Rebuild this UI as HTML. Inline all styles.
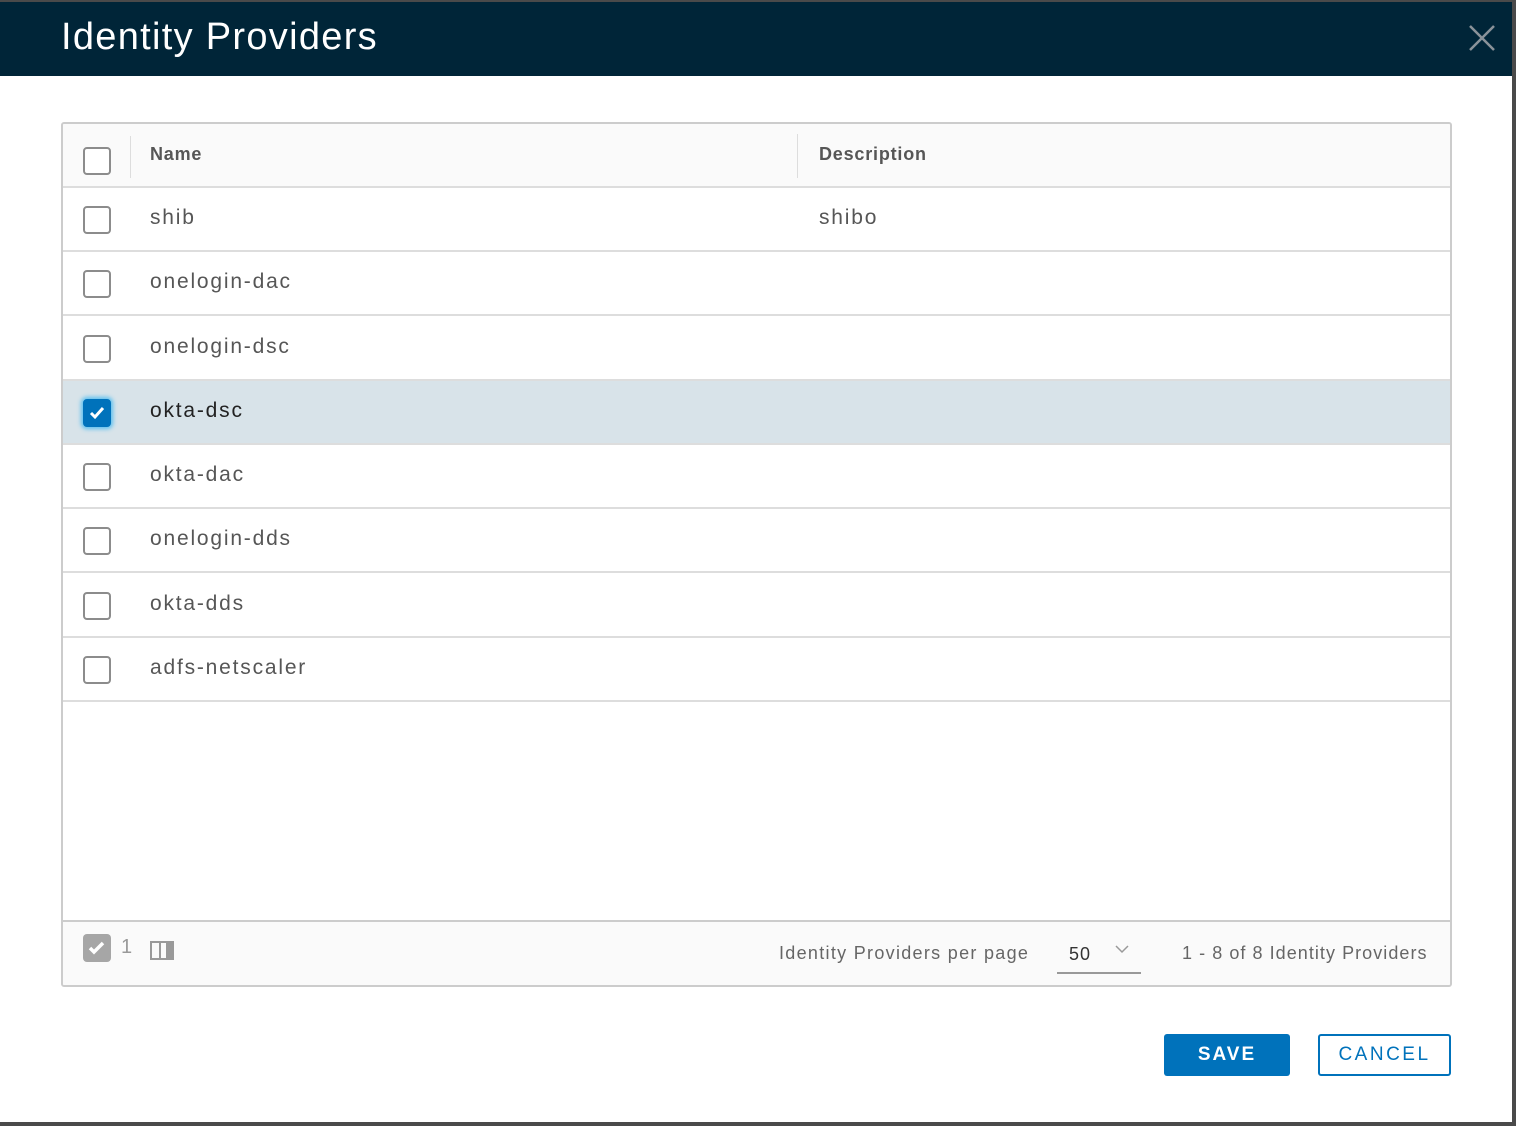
<!DOCTYPE html>
<html><head><style>
*{box-sizing:border-box;margin:0;padding:0}
body{width:1516px;height:1126px;background:#4a4a4a;font-family:"Liberation Sans",sans-serif;position:relative;overflow:hidden}
.modal{position:absolute;left:0;top:2px;width:1512px;height:1120px;background:#fff}
.hdr{height:74px;background:#002538;position:relative}
.hdr h1{position:absolute;left:61px;top:14px;font-weight:normal;color:#fff;font-size:38px;letter-spacing:1.3px}
.x{position:absolute;left:1468px;top:22px}
.tbl{position:absolute;left:61px;top:120px;width:1391px;height:865px;border:2px solid #ccc;border-radius:3px;overflow:hidden}
.row{position:absolute;left:0;width:100%;height:64px;border-bottom:2px solid #ddd;font-size:21px;color:#565656;letter-spacing:1.8px}
.row span{position:absolute;top:18px}
.cb{position:absolute;left:20px;top:18px;width:28px;height:28px;border:2px solid #8c8c8c;border-radius:4px;background:#fff}
.th{background:#fafafa;font-size:18px;font-weight:bold;color:#565656;border-bottom:2px solid #ddd;letter-spacing:0.8px}
.foot{position:absolute;left:0;bottom:0;width:100%;height:65px;background:#fafafa;border-top:2px solid #ccc;font-size:18px;color:#666}
.btn{position:absolute;top:1032px;height:42px;border-radius:3px;font-size:19px;font-weight:bold;letter-spacing:2px;text-align:center;line-height:42px}
</style></head><body>
<div class="modal">
<div class="hdr"><h1>Identity Providers</h1>
<svg class="x" width="28" height="28"><path d="M2 2L26 26M26 2L2 26" stroke="#8a9299" stroke-width="2.5"/></svg></div>
<div class="tbl">
<div class="row th" style="top:0"><div class="cb" style="top:23px"></div><div style="position:absolute;left:67px;top:12px;width:1px;height:42px;background:#ddd"></div><span style="left:87px;top:20px">Name</span><div style="position:absolute;left:734px;top:10px;width:1px;height:44px;background:#ddd"></div><span style="left:756px;top:20px">Description</span></div>
<div class="row" style="top:64px"><div class="cb"></div><span style="left:87px">shib</span><span style="left:756px">shibo</span></div>
<div class="row" style="top:128px"><div class="cb"></div><span style="left:87px">onelogin-dac</span></div>
<div class="row" style="top:193px"><div class="cb"></div><span style="left:87px">onelogin-dsc</span></div>
<div class="row" style="top:257px;background:#d8e3e9;color:#222"><div class="cb" style="background:#0072bb;border-color:#0072bb;box-shadow:0 0 4px 2px #5bc0f0"><svg width="24" height="24" style="position:absolute;left:0;top:0"><path d="M6 12l4 4 8-9" stroke="#fff" stroke-width="3" fill="none"/></svg></div><span style="left:87px">okta-dsc</span></div>
<div class="row" style="top:321px"><div class="cb"></div><span style="left:87px">okta-dac</span></div>
<div class="row" style="top:385px"><div class="cb"></div><span style="left:87px">onelogin-dds</span></div>
<div class="row" style="top:450px"><div class="cb"></div><span style="left:87px">okta-dds</span></div>
<div class="row" style="top:514px"><div class="cb"></div><span style="left:87px">adfs-netscaler</span></div>
<div class="foot">
<div style="position:absolute;left:20px;top:12px;width:28px;height:28px;background:#a6a6a6;border-radius:4px"><svg width="28" height="28"><path d="M7 14l4 4 9-9" stroke="#fff" stroke-width="3.5" fill="none"/></svg></div>
<span style="position:absolute;left:58px;top:14px;font-size:20px;color:#999">1</span>
<div style="position:absolute;left:87px;top:19px;width:24px;height:19px;border:2px solid #999;border-right:8px solid #999"><div style="position:absolute;left:7px;top:0;width:2px;height:15px;background:#999"></div></div>
<span style="position:absolute;left:716px;top:21px;letter-spacing:1.3px">Identity Providers per page</span>
<span style="position:absolute;left:1006px;top:22px;color:#333;letter-spacing:1px">50</span>
<svg style="position:absolute;left:1052px;top:22px" width="14" height="10"><path d="M1 2l6 6 6-6" stroke="#999" stroke-width="1.5" fill="none"/></svg>
<div style="position:absolute;left:994px;top:50px;width:84px;height:2px;background:#999"></div>
<span style="position:absolute;left:1119px;top:21px;letter-spacing:1.05px">1 - 8 of 8 Identity Providers</span>
</div>
</div>
<div class="btn" style="left:1164px;width:126px;background:#0072bb;color:#fff">SAVE</div>
<div class="btn" style="left:1318px;width:133px;border:2px solid #0072bb;color:#0072bb;background:#fff;line-height:38px;font-weight:normal;letter-spacing:2.5px">CANCEL</div>
</div>
</body></html>
